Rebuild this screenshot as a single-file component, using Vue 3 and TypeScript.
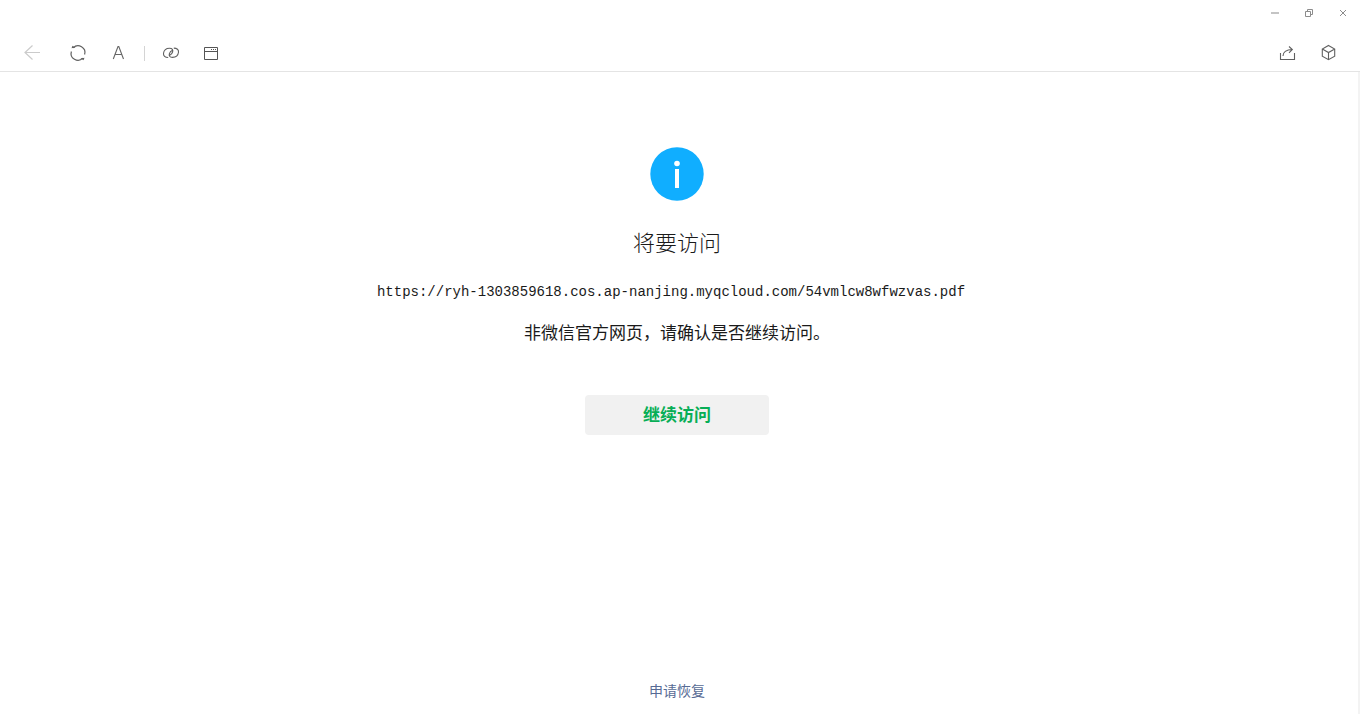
<script setup lang="ts">
const url = 'https://ryh-1303859618.cos.ap-nanjing.myqcloud.com/54vmlcw8wfwzvas.pdf'
</script>

<template>
  <div class="window">
    <header class="chrome">
      <div class="captions">
        <button type="button" aria-label="最小化">
          <svg width="10" height="10" viewBox="0 0 10 10"><path d="M1 5h8" stroke="#c4c4c4" stroke-width="2" /></svg>
        </button>
        <button type="button" aria-label="还原">
          <svg width="10" height="10" viewBox="0 0 10 10"><path d="M1.500 3.500h5v5h-5zM3.500 3.500v-2h5v5h-2" stroke="#8c8c8c" /></svg>
        </button>
        <button type="button" aria-label="关闭">
          <svg width="10" height="10" viewBox="0 0 10 10"><path d="M2 2l6 6M8 2L2 8" stroke="#8c8c8c" /></svg>
        </button>
      </div>
      <nav class="toolbar">
        <button class="back" type="button" disabled aria-label="返回">
          <svg width="20" height="20" viewBox="0 0 20 20"><path d="M18 9.500H3M10.500 2.500L3 9.500l7.500 7" stroke="#cbcbcb" stroke-width="1.200" /></svg>
        </button>
        <button class="reload" type="button" aria-label="刷新">
          <svg width="20" height="20" viewBox="0 0 20 20">
            <path d="M5.200 4.800A6.800 6.800 0 0 1 16.600 11.500M14.800 15.200A6.800 6.800 0 0 1 3.400 8.500" stroke="#606060" stroke-width="1.200" />
            <path d="M3.500 5.200L4.500 2.800L7.500 4.600zM16.500 14.800L15.500 17.200L12.500 15.400z" fill="#606060" />
          </svg>
        </button>
        <button class="font" type="button" aria-label="字体">
          <svg width="20" height="20" viewBox="0 0 20 20"><path d="M5.300 16L10 3.500h.8L15.500 16M7 11.500h6.800" stroke="#666" stroke-width="1.100" /></svg>
        </button>
        <span class="divider"></span>
        <button class="link" type="button" aria-label="复制链接">
          <svg width="20" height="20" viewBox="0 0 20 20">
            <path d="M7.200 14.500C4 14.500 2.200 12.800 2.500 10.300C2.900 7.200 5.500 5.200 8.600 5.200C11.300 5.200 12.300 7 11.600 9C11.100 10.500 10 11.700 8.800 12.200M12.800 5.100C16 5.100 17.800 6.800 17.500 9.300C17.100 12.400 14.500 14.400 11.400 14.400C8.700 14.400 7.700 12.600 8.400 10.600C8.900 9.100 10 7.900 11.200 7.400" stroke="#606060" stroke-width="1.100" />
          </svg>
        </button>
        <button class="page" type="button" aria-label="在浏览器打开">
          <svg width="20" height="20" viewBox="0 0 20 20">
            <path d="M3.500 4.500h13v12h-13zM3.500 8.500h13" stroke="#555" />
            <path d="M10 6h1v1h-1zM12 6h1v1h-1zM14 6h1v1h-1z" fill="#555" />
          </svg>
        </button>
        <span class="spacer"></span>
        <button class="share" type="button" aria-label="分享">
          <svg width="20" height="20" viewBox="0 0 20 20"><path d="M3.500 10v6.500h14V10M6 13C6 9.500 9 6.500 15.300 6.500M12 3.500l3.300 3-3.300 3.300" stroke="#606060" stroke-width="1.100" /></svg>
        </button>
        <button class="box" type="button" aria-label="小程序">
          <svg width="20" height="20" viewBox="0 0 20 20"><path d="M10.500 2.500l6.200 3.500v7.200l-6.200 3.500-6.200-3.500V6zM4.300 6l6.200 3.500L16.700 6M10.500 9.500v7.200" stroke="#606060" stroke-width="1.100" /></svg>
        </button>
      </nav>
    </header>
    <main class="content">
      <svg class="info" width="54" height="54" viewBox="0 0 54 54" role="img" aria-label="提示">
        <circle cx="27" cy="27" r="26.700" fill="#10aeff" />
        <circle cx="27" cy="16.500" r="2.800" fill="#fff" />
        <path d="M25 22h4v19h-4z" fill="#fff" />
      </svg>
      <h1>将要访问</h1>
      <p class="url">{{ url }}</p>
      <p class="notice">非微信官方网页，请确认是否继续访问。</p>
      <button class="continue" type="button">继续访问</button>
      <a class="restore" href="#">申请恢复</a>
    </main>
  </div>
</template>

<style>
body {
  margin: 0;
  background: #fff;
}
</style>

<style scoped>
.window {
  display: flex;
  flex-direction: column;
  min-height: 100vh;
  font-family: "Noto Sans CJK SC", sans-serif;
  color: #1a1a1a;
}
button {
  padding: 0;
  border: 0;
  background: none;
  font: inherit;
}
.chrome {
  border-bottom: 1px solid #e4e4e4;
}
.chrome button {
  display: flex;
}
.chrome svg {
  fill: none;
}
.captions {
  display: flex;
  justify-content: flex-end;
  gap: 24px;
  padding: 8px 12px 0 0;
  height: 18px;
}
.toolbar {
  display: flex;
  align-items: center;
  height: 20px;
  padding: 17px 22px 8px;
}
.reload {
  margin-left: 26px;
}
.font {
  margin-left: 20px;
}
.divider {
  width: 1px;
  height: 15px;
  margin: 0 16px;
  background: #d4d4d4;
}
.page {
  margin-left: 20px;
}
.spacer {
  flex: 1;
}
.box {
  margin-left: 21px;
}
.content {
  display: flex;
  flex: 1;
  flex-direction: column;
  align-items: center;
  box-sizing: border-box;
  padding: 75px 4px 10px 0;
  border-right: 2px solid #f3f3f3;
}
.info {
  flex: none;
}
h1 {
  margin: 24px 0 0;
  font-size: 22px;
  line-height: 32px;
  font-weight: 300;
}
.url {
  align-self: stretch;
  margin: 22px 0 0;
  padding-right: 12px;
  text-align: center;
  font-family: "Liberation Mono", monospace;
  font-size: 14px;
  line-height: 26px;
  overflow-wrap: anywhere;
}
.notice {
  margin: 14px 0 0;
  font-size: 17px;
  line-height: 26px;
}
.continue {
  width: 184px;
  height: 40px;
  margin-top: 50px;
  padding-bottom: 2px;
  border-radius: 4px;
  background: #f1f1f1;
  color: #07ae56;
  font-size: 17px;
  line-height: 38px;
  font-weight: 700;
}
.restore {
  margin-top: auto;
  color: #576b95;
  font-size: 14px;
  line-height: 28px;
  text-decoration: none;
}
</style>
